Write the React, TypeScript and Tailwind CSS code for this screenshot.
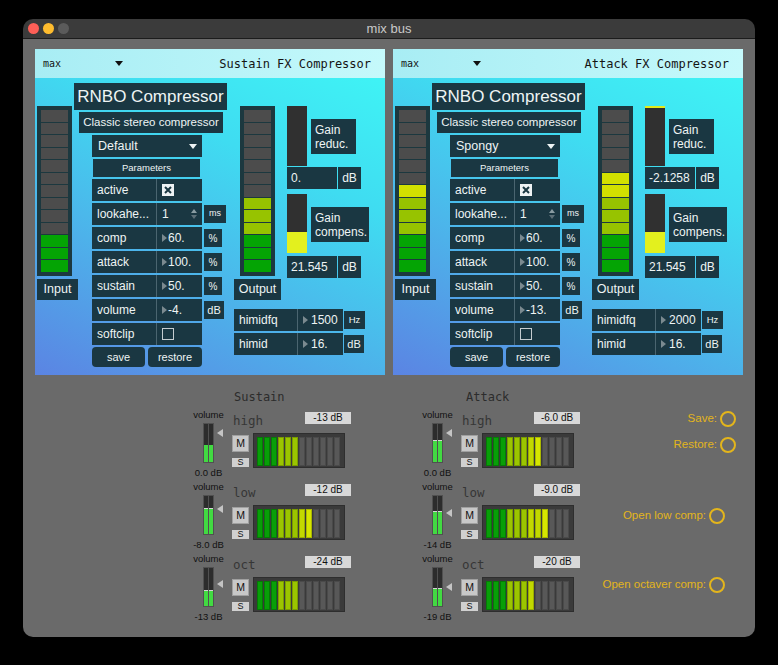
import React from 'react';

// segment colours for the big vertical meters
const SEG: Record<string, string> = {
  o: 'bg-[#4c4c4c]',
  g: 'bg-[#04a404]',
  y: 'bg-[#97c300]',
  Y: 'bg-[#d2e000]',
};

// bar colours for the mixer meters
const BAR: Record<string, string> = {
  '0': 'bg-[#585858] border-[#4a4a4a]',
  g: 'bg-[#089f08] border-[#067a06]',
  y: 'bg-[#9bc500] border-[#7a9c00]',
  Y: 'bg-[#c2d800] border-[#9aad00]',
  Z: 'bg-[#d6e600] border-[#aab800]',
};

const BOX = 'bg-[#1a3742]';

type Row = {
  label: string;
  kind?: 'check' | 'spin' | 'num';
  on?: boolean;
  value?: string;
  unit?: string;
};

const UNIT_W: Record<string, string> = {
  ms: 'w-[22px] text-[9px]',
  '%': 'w-[18px] text-[10px]',
  dB: 'w-[20px] text-[11px]',
  Hz: 'w-[21px] text-[9.5px]',
};

function VMeter({ segs }: { segs: string }) {
  return (
    <div className="w-[35px] h-[170px] bg-[#1c383f] px-[4px] py-[4px] flex flex-col gap-[1px]">
      {segs.split('').map((s, i) => (
        <div key={i} className={`flex-1 ${SEG[s]}`} />
      ))}
    </div>
  );
}

function RightTri() {
  return <span className="w-0 h-0 border-y-[4px] border-y-transparent border-l-[5px] border-l-[#7b8a90]" />;
}

function Check({ on }: { on?: boolean }) {
  if (!on) return <span className="w-[12px] h-[12px] border border-[#c4ccd0]" />;
  return (
    <span className="w-[12px] h-[12px] bg-[#eef2f4] flex items-center justify-center">
      <svg width="8" height="8" viewBox="0 0 8 8">
        <path d="M1 1 L7 7 M7 1 L1 7" stroke="#1a3742" strokeWidth="2" />
      </svg>
    </span>
  );
}

function ParamRow({ row }: { row: Row }) {
  return (
    <div className="flex items-center">
      <div className={`w-[110px] h-[22px] flex ${BOX}`}>
        <div className="w-[64px] pl-[5px] flex items-center">{row.label}</div>
        <div className="flex-1 border-l border-[#4b6570] flex items-center pl-[5px] pr-[5px]">
          {row.kind === 'check' && <Check on={row.on} />}
          {row.kind === 'spin' && (
            <>
              <span>{row.value}</span>
              <span className="ml-auto flex flex-col gap-[2px]">
                <span className="w-0 h-0 border-x-[3px] border-x-transparent border-b-[4px] border-b-[#8a9ca2]" />
                <span className="w-0 h-0 border-x-[3px] border-x-transparent border-t-[4px] border-t-[#5d7078]" />
              </span>
            </>
          )}
          {(!row.kind || row.kind === 'num') && (
            <>
              <RightTri />
              <span className="ml-[1px]">{row.value}</span>
            </>
          )}
        </div>
      </div>
      {row.unit && (
        <div className={`ml-[2px] h-[18px] flex items-center justify-center ${BOX} ${UNIT_W[row.unit]}`}>
          {row.unit}
        </div>
      )}
    </div>
  );
}

function HimidRow({ label, value, unit }: { label: string; value: string; unit: string }) {
  return (
    <div className="flex items-center">
      <div className={`w-[109px] h-[22px] flex ${BOX}`}>
        <div className="w-[63px] pl-[5px] flex items-center">{label}</div>
        <div className="flex-1 border-l border-[#4b6570] flex items-center pl-[5px]">
          <RightTri />
          <span className="ml-[3px]">{value}</span>
        </div>
      </div>
      <div className={`ml-[1px] h-[18px] flex items-center justify-center ${BOX} ${UNIT_W[unit]}`}>{unit}</div>
    </div>
  );
}

type PanelProps = {
  title: string;
  preset: string;
  volume: string;
  himidfq: string;
  reduc: string;
  reducTop?: boolean;
  input: string;
  output: string;
};

function CompPanel(p: PanelProps) {
  const rows: Row[] = [
    { label: 'active', kind: 'check', on: true },
    { label: 'lookahe...', kind: 'spin', value: '1', unit: 'ms' },
    { label: 'comp', value: '60.', unit: '%' },
    { label: 'attack', value: '100.', unit: '%' },
    { label: 'sustain', value: '50.', unit: '%' },
    { label: 'volume', value: p.volume, unit: 'dB' },
    { label: 'softclip', kind: 'check', on: false },
  ];
  return (
    <div className="w-[350px] h-[326px] flex flex-col">
      <div className="h-[29px] bg-[linear-gradient(90deg,#a8edf4,#c5f9fb)] flex items-center pl-[8px] pr-[14px] text-[#141414]">
        <span className="font-['DejaVu_Sans_Mono',monospace] text-[10px]">max</span>
        <span className="ml-[54px] w-0 h-0 border-x-[4px] border-x-transparent border-t-[5px] border-t-[#111]" />
        <span className="ml-auto font-['DejaVu_Sans_Mono',monospace] text-[12px]">{p.title}</span>
      </div>
      <div className="flex-1 flex text-[12px] text-[#eef4f4] bg-[linear-gradient(205deg,#3ff3f5_0%,#3fdcf1_30%,#4bb8eb_60%,#5b84e3_100%)]">
        {/* input meter */}
        <div className="w-[35px] ml-[2px] mt-[28px] flex flex-col">
          <VMeter segs={p.input} />
          <div className={`mt-[3px] w-[41px] h-[21px] flex items-center justify-center text-[12.5px] ${BOX}`}>Input</div>
        </div>

        {/* title + params */}
        <div className="ml-[2px] w-[153px] flex flex-col">
          <div className={`mt-[5px] h-[27px] flex items-center justify-center text-[17px] ${BOX}`}>RNBO Compressor</div>
          <div className={`mt-[2px] ml-[5px] w-[144px] h-[21px] flex items-center justify-center text-[11.5px] ${BOX}`}>
            Classic stereo compressor
          </div>
          <div className={`mt-[2px] ml-[18px] w-[110px] h-[22px] flex items-center pl-[6px] pr-[5px] text-[12.5px] ${BOX}`}>
            {p.preset}
            <span className="ml-auto w-0 h-0 border-x-[4px] border-x-transparent border-t-[5px] border-t-[#eef4f4]" />
          </div>
          <div className={`mt-[2px] ml-[19px] w-[107px] h-[18px] flex items-center justify-center text-[9.5px] ${BOX}`}>
            Parameters
          </div>
          <div className="mt-[2px] ml-[18px] flex flex-col gap-[2px]">
            {rows.map((r) => (
              <ParamRow key={r.label} row={r} />
            ))}
          </div>
          <div className="mt-[2px] ml-[18px] flex gap-[3px] text-[11px]">
            <div className={`w-[53px] h-[20px] rounded-[4px] flex items-center justify-center ${BOX}`}>save</div>
            <div className={`w-[54px] h-[20px] rounded-[4px] flex items-center justify-center ${BOX}`}>restore</div>
          </div>
        </div>

        {/* output + gain */}
        <div className="ml-[7px] flex flex-col">
          <div className="flex items-start">
            <div className="w-[47px] flex flex-col">
              <div className="ml-[6px] mt-[28px]">
                <VMeter segs={p.output} />
              </div>
              <div className={`mt-[3px] w-[47px] h-[21px] flex items-center justify-center text-[12.5px] ${BOX}`}>Output</div>
            </div>
            <div className="ml-[6px] mt-[28px] flex flex-col">
              <div className="flex items-start">
                <div className="w-[20px] h-[60px] bg-[#303030] flex flex-col">
                  {p.reducTop && <div className="h-[2px] bg-[#e2ec1c]" />}
                </div>
                <div className={`ml-[4px] mt-[13px] w-[45px] h-[35px] pl-[4px] flex flex-col justify-center leading-[14px] ${BOX}`}>
                  <span>Gain</span>
                  <span>reduc.</span>
                </div>
              </div>
              <div className="mt-[1px] flex">
                <div className={`w-[50px] h-[22px] pl-[4px] flex items-center ${BOX}`}>{p.reduc}</div>
                <div className={`ml-[1px] w-[23px] h-[22px] flex items-center justify-center ${BOX}`}>dB</div>
              </div>
              <div className="mt-[5px] flex items-start">
                <div className="w-[20px] h-[59px] bg-[#303030] flex flex-col justify-end">
                  <div className="h-[21px] bg-[#e3f01e]" />
                </div>
                <div className={`ml-[4px] mt-[13px] w-[58px] h-[35px] pl-[4px] flex flex-col justify-center leading-[14px] ${BOX}`}>
                  <span>Gain</span>
                  <span>compens.</span>
                </div>
              </div>
              <div className="mt-[3px] flex">
                <div className={`w-[50px] h-[22px] pl-[4px] flex items-center ${BOX}`}>21.545</div>
                <div className={`ml-[1px] w-[23px] h-[22px] flex items-center justify-center ${BOX}`}>dB</div>
              </div>
            </div>
          </div>
          <div className="mt-[9px] flex flex-col gap-[2px]">
            <HimidRow label="himidfq" value={p.himidfq} unit="Hz" />
            <HimidRow label="himid" value="16." unit="dB" />
          </div>
        </div>
      </div>
    </div>
  );
}

type Strip = {
  name: string;
  db: string;
  val: string;
  bars: string;
  fill: number;
  marker: boolean;
  tri: number;
};

function MiniMeter({ fill, marker }: { fill: number; marker: boolean }) {
  const col = (
    <div className="flex-1 bg-[#2c2c2c] flex flex-col justify-end">
      {marker && <div className="h-[1px] bg-[#d4d4d4]" />}
      <div className="bg-[#42da42]" style={{ height: fill }} />
    </div>
  );
  return (
    <div className="w-[11px] h-[40px] bg-[#505050] p-[1px] flex gap-[1px]">
      {col}
      {col}
    </div>
  );
}

function HMeter({ bars }: { bars: string }) {
  return (
    <div className="ml-[4px] w-[92px] h-[35px] bg-[#3a3a3a] border border-[#2e2e2e] pl-[3px] pt-[3px] flex gap-[1px]">
      {bars.split('').map((b, i) => (
        <div key={i} className={`w-[6px] h-[29px] border ${BAR[b]}`} />
      ))}
    </div>
  );
}

function ChannelStrip({ s }: { s: Strip }) {
  return (
    <div className="flex h-[68px]">
      <div className="w-[31px] flex flex-col items-center text-[#111]">
        <div className="h-[10px] leading-[10px] text-[9.5px]">volume</div>
        <div className="relative mt-[3px]">
          <MiniMeter fill={s.fill} marker={s.marker} />
          <span
            className="absolute left-[14px] w-0 h-0 border-y-[4px] border-y-transparent border-r-[6px] border-r-[#c4c4c4]"
            style={{ top: s.tri }}
          />
        </div>
        <div className="mt-[5px] h-[10px] leading-[10px] text-[9.5px] whitespace-nowrap">{s.db}</div>
      </div>
      <div className="ml-[8px] w-[119px] flex flex-col">
        <div className="flex items-start h-[23px]">
          <span className="mt-[3px] ml-[1px] font-['DejaVu_Sans_Mono',monospace] text-[12.5px] leading-[16px] text-[#363636]">
            {s.name}
          </span>
          <span className="ml-auto mt-[2px] w-[46px] h-[12px] bg-[#d8d8d8] text-[10px] leading-[12px] text-center text-[#111]">
            {s.val}
          </span>
        </div>
        <div className="flex">
          <div className="flex flex-col pt-[2px]">
            <div className="w-[17px] h-[17px] bg-[#c8c8c8] border border-[#a0a0a0] flex items-center justify-center text-[10.5px] text-[#111]">
              M
            </div>
            <div className="mt-[6px] w-[17px] h-[9px] bg-[#d0d0d0] flex items-center justify-center text-[9px] leading-[9px] text-[#111]">
              S
            </div>
          </div>
          <HMeter bars={s.bars} />
        </div>
      </div>
    </div>
  );
}

function Group({ title, offset, strips, className }: { title: string; offset: string; strips: Strip[]; className?: string }) {
  return (
    <div className={`w-[158px] flex flex-col ${className ?? ''}`}>
      <div className={`h-[14px] leading-[14px] font-['DejaVu_Sans_Mono',monospace] text-[12px] text-[#2c2c2c] ${offset}`}>
        {title}
      </div>
      <div className="mt-[6px] flex flex-col gap-[4px]">
        {strips.map((s) => (
          <ChannelStrip key={s.name} s={s} />
        ))}
      </div>
    </div>
  );
}

function Ring() {
  return <span className="w-[16px] h-[16px] rounded-full border-2 border-[#e3b51c]" />;
}

const SUSTAIN: Strip[] = [
  { name: 'high', db: '0.0 dB', val: '-13 dB', bars: 'gggyyy000000', fill: 17, marker: false, tri: 6 },
  { name: 'low', db: '-8.0 dB', val: '-12 dB', bars: 'gggyyyYZ0000', fill: 25, marker: true, tri: 10 },
  { name: 'oct', db: '-13 dB', val: '-24 dB', bars: 'gggyyy000000', fill: 15, marker: true, tri: 13 },
];

const ATTACK: Strip[] = [
  { name: 'high', db: '0.0 dB', val: '-6.0 dB', bars: 'gggyyyYZ0000', fill: 21, marker: true, tri: 6 },
  { name: 'low', db: '-14 dB', val: '-9.0 dB', bars: 'gggyyyYYZ000', fill: 22, marker: true, tri: 14 },
  { name: 'oct', db: '-19 dB', val: '-20 dB', bars: 'gggyyyY00000', fill: 17, marker: true, tri: 16 },
];

export default function App() {
  return (
    <div className="w-[778px] h-[665px] bg-black pt-[19px] pl-[23px] font-['Liberation_Sans',Arial,sans-serif]">
      <div className="w-[732px] h-[618px] rounded-[10px] overflow-hidden flex flex-col">
        {/* title bar */}
        <div className="h-[20px] bg-[#3b3b3b] border-b border-[#1c1c1c] grid grid-cols-[1fr_auto_1fr] items-center">
          <div className="flex items-center pl-[5px] gap-[4px]">
            <span className="w-[11px] h-[11px] rounded-full bg-[#fe5f57]" />
            <span className="w-[11px] h-[11px] rounded-full bg-[#febc2e]" />
            <span className="w-[11px] h-[11px] rounded-full bg-[#5b5b5b]" />
          </div>
          <div className="text-[13px] text-[#c9c9c9] leading-[19px]">mix bus</div>
          <div />
        </div>

        <div className="flex-1 bg-[#6a6a6a] flex flex-col">
          <div className="flex gap-[8px] pt-[10px] pl-[12px]">
            <CompPanel
              title="Sustain FX Compressor"
              preset="Default"
              volume="-4."
              himidfq="1500"
              reduc="0."
              input="ooooooooooggg"
              output="oooooooyyyggg"
            />
            <CompPanel
              title="Attack FX Compressor"
              preset="Spongy"
              volume="-13."
              himidfq="2000"
              reduc="-2.1258"
              reducTop
              input="ooooooYyyyggg"
              output="oooooYYyyyggg"
            />
          </div>

          <div className="flex pl-[170px] pt-[15px]">
            <Group title="Sustain" offset="ml-[41px]" strips={SUSTAIN} />
            <Group title="Attack" offset="ml-[44px]" strips={ATTACK} className="ml-[71px]" />
            <div className="ml-auto pr-[19px] flex flex-col items-end text-[11.5px] text-[#e3b51c]">
              <div className="mt-[21px] h-[16px] flex items-center gap-[3px]">
                <span>Save:</span>
                <Ring />
              </div>
              <div className="mt-[10px] h-[16px] flex items-center gap-[3px]">
                <span>Restore:</span>
                <Ring />
              </div>
              <div className="mt-[55px] mr-[11px] h-[16px] flex items-center gap-[3px] whitespace-nowrap">
                <span>Open low comp:</span>
                <Ring />
              </div>
              <div className="mt-[53px] mr-[11px] h-[16px] flex items-center gap-[3px] whitespace-nowrap">
                <span>Open octaver comp:</span>
                <Ring />
              </div>
            </div>
          </div>
        </div>
      </div>
    </div>
  );
}
